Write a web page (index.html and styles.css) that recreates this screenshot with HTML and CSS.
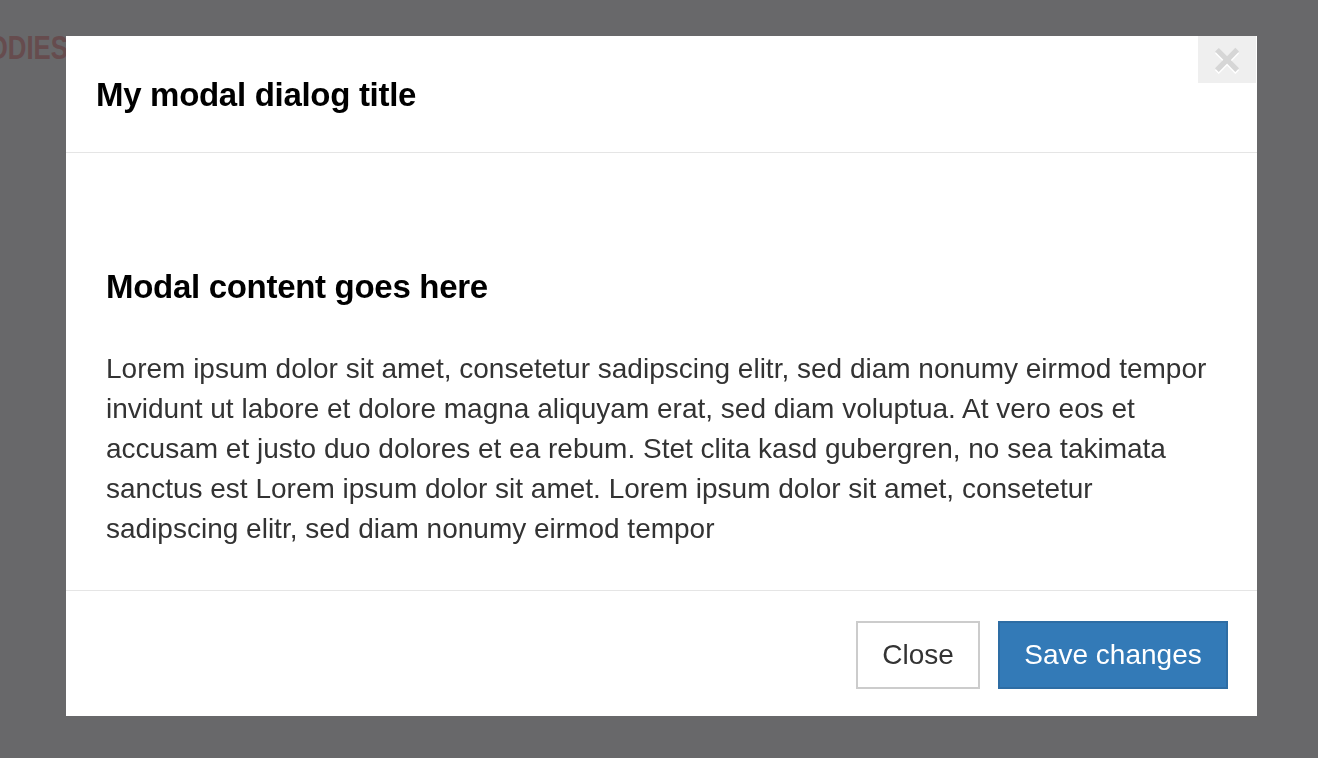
FILE: index.html
```html
<!DOCTYPE html>
<html>
<head>
    <title>Modal dialog</title>
    <link rel="stylesheet" href="styles.css">
</head>
<body>
    <!-- Page behind the backdrop -->
    <div class="page">
        <div class="page-brand">BODIES</div>
    </div>

    <div class="backdrop">
        <div class="modal">
            <div class="modal-header">
                <h4 class="modal-title">My modal dialog title</h4>
                <button type="button" class="modal-close">&times;</button>
            </div>
            <div class="modal-body">
                <h3>Modal content goes here</h3>
                <p>Lorem ipsum dolor sit amet, consetetur sadipscing elitr, sed diam nonumy eirmod tempor invidunt ut labore et dolore magna aliquyam erat, sed diam voluptua. At vero eos et accusam et justo duo dolores et ea rebum. Stet clita kasd gubergren, no sea takimata sanctus est Lorem ipsum dolor sit amet. Lorem ipsum dolor sit amet, consetetur sadipscing elitr, sed diam nonumy eirmod tempor</p>
            </div>
            <div class="modal-footer">
                <button type="button" class="btn btn-default">Close</button>
                <button type="button" class="btn btn-primary">Save changes</button>
            </div>
        </div>
    </div>
</body>
</html>
```

FILE: styles.css
```css
body {
    margin: 0;
    font-family: "Liberation Sans", Arial, sans-serif;
    background-color: #68686a;
    height: 758px;
    overflow: hidden;
}
.page {
    padding: 30px 0 0 0;
}
.page-brand {
    display: inline-block;
    margin-left: -31px;
    font-size: 34px;
    line-height: 34px;
    font-weight: bold;
    color: #664c4e;
    transform: scaleX(0.76);
    transform-origin: left;
}
.backdrop {
    position: fixed;
    top: 0;
    left: 0;
    right: 0;
    bottom: 0;
    padding: 36px 0 0 66px;
}
.modal {
    width: 1191px;
    height: 680px;
    background-color: #fff;
    display: flex;
    flex-direction: column;
}
.modal-header {
    height: 116px;
    border-bottom: 1px solid #e5e5e5;
    display: flex;
    align-items: flex-start;
    justify-content: space-between;
}
.modal-title {
    margin: 0;
    padding: 59px 0 0 30px;
    line-height: 0;
    font-size: 33px;
    font-weight: bold;
    letter-spacing: -0.3px;
    color: #000;
}
.modal-close {
    width: 58px;
    height: 47px;
    margin-right: 1px;
    padding: 0;
    border: none;
    background-color: #efefef;
    color: #d6d6d6;
    font-family: "Liberation Sans", Arial, sans-serif;
    font-size: 48px;
    font-weight: bold;
    line-height: 44px;
    text-shadow: 0 2px 0 #fff;
}
.modal-body {
    flex: 1;
    padding: 0 40px;
}
.modal-body h3 {
    margin: 114px 0 0 0;
    height: 40px;
    line-height: 40px;
    font-size: 33px;
    font-weight: bold;
    letter-spacing: -0.3px;
    color: #000;
}
.modal-body p {
    margin: 42px 0 0 0;
    font-size: 28px;
    line-height: 40px;
    color: #333;
}
.modal-footer {
    height: 126px;
    border-top: 1px solid #e5e5e5;
    display: flex;
    justify-content: flex-end;
    align-items: flex-start;
    gap: 18px;
    padding: 30px 29px 0 0;
    box-sizing: border-box;
}
.btn {
    height: 68px;
    padding: 0;
    font-family: "Liberation Sans", Arial, sans-serif;
    font-size: 28px;
    cursor: pointer;
}
.btn-default {
    width: 124px;
    background-color: #fff;
    color: #333;
    border: 2px solid #ccc;
}
.btn-primary {
    width: 230px;
    background-color: #337ab7;
    color: #fff;
    border: 2px solid #2e6da4;
}
```
